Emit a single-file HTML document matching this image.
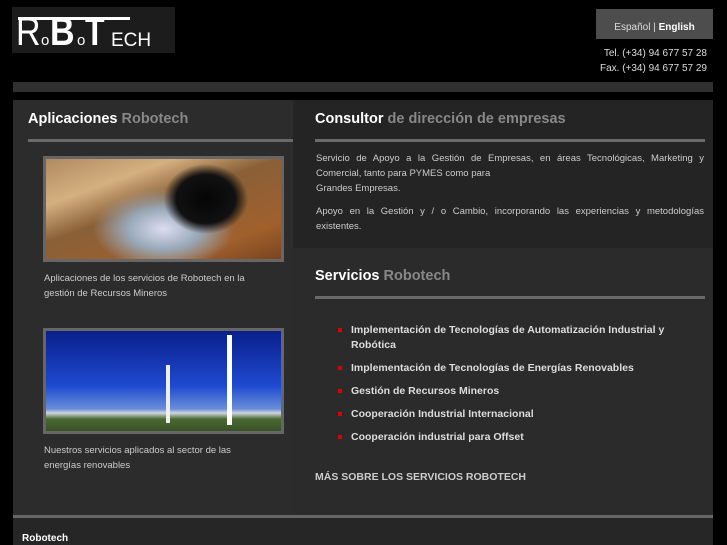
<!DOCTYPE html>
<html><head><meta charset="utf-8"><style>
*{margin:0;padding:0;box-sizing:border-box}
body{width:727px;height:545px;background:#000;font-family:"Liberation Sans",sans-serif;position:relative;overflow:hidden;color:#ddd}
.a{position:absolute}
h2{font-size:14.5px;font-weight:bold;color:#fff;position:absolute}
h2 span{color:#888}
.rule{position:absolute;height:3px;background:#6a6a6a}
p{font-size:9.5px;line-height:15px;color:#ccc}
ul{list-style:none}
li{font-size:10.5px;font-weight:bold;color:#ddd;position:relative;padding-left:36px;line-height:15px;margin-bottom:8px}
li:before{content:"";position:absolute;left:23px;top:5px;width:4px;height:4px;background:#d00}
.L{position:absolute;color:#fff;font-family:"Liberation Sans",sans-serif;line-height:1}
</style></head><body>
<div class="a" style="left:12px;top:7px;width:163px;height:46px;background:#1c1c1c"></div>
<div class="L" style="left:16px;top:12px;font-size:40px;transform:scaleX(0.85);transform-origin:left">R</div>
<div class="L" style="left:41px;top:33px;font-size:15px">o</div>
<div class="L" style="left:50px;top:12px;font-size:40px;font-weight:bold;transform:scaleX(0.85);transform-origin:left">B</div>
<div class="L" style="left:77px;top:33px;font-size:15px">o</div>
<div class="L" style="left:85px;top:12px;font-size:40px;font-weight:bold;transform:scaleX(0.8);transform-origin:left">T</div>
<div class="L" style="left:111px;top:31px;font-size:19px;letter-spacing:0px">ECH</div>
<div class="a" style="left:18px;top:17px;width:112px;height:3px;background:#fff"></div>
<div class="a" style="left:596px;top:9px;width:117px;height:30px;background:#4d4d4d;font-size:10px;color:#ddd;text-align:center;line-height:37px">Español | <b style="color:#fff">English</b></div>
<div class="a" style="right:20px;top:46px;font-size:10px;color:#ddd;text-align:right;line-height:15px">Tel. (+34) 94 677 57 28<br>Fax. (+34) 94 677 57 29</div>
<div class="a" style="left:13px;top:82px;width:700px;height:10px;background:#303030"></div>
<div class="a" style="left:13px;top:100px;width:280px;height:415px;background:#2c2c2c"></div>
<div class="a" style="left:293px;top:100px;width:420px;height:148px;background:#242424"></div>
<div class="a" style="left:293px;top:248px;width:420px;height:267px;background:#2b2b2b"></div>
<h2 style="left:28px;top:111px">Aplicaciones <span>Robotech</span></h2>
<div class="rule" style="left:28px;top:139px;width:265px"></div>
<h2 style="left:315px;top:111px">Consultor <span>de dirección de empresas</span></h2>
<div class="rule" style="left:315px;top:139px;width:390px"></div>
<div class="a" style="left:43px;top:156px;width:241px;height:106px;border:3px solid #666;background:radial-gradient(ellipse 18% 35% at 68% 40%,#050505 0,#111 70%,transparent 100%),radial-gradient(ellipse 30% 40% at 50% 70%,#dde 0,#9ab 50%,transparent 100%),linear-gradient(160deg,#b08a60,#d4b080 25%,#8a6038 45%,#a0602c 80%,#7a4420)"></div>
<div class="a" style="left:44px;top:271px;width:225px"><p>Aplicaciones de los servicios de Robotech en la gestión de Recursos Mineros</p></div>
<div class="a" style="left:43px;top:328px;width:241px;height:106px;border:3px solid #666;background:linear-gradient(180deg,#0a1f8a 0,#1e4ad0 55%,#6a8ed8 78%,#cfd6e0 82%,#4a6a30 88%,#3a5028 100%)"></div>
<div class="a" style="left:166px;top:365px;width:4px;height:58px;background:#eee"></div>
<div class="a" style="left:227px;top:335px;width:5px;height:90px;background:#fff"></div>
<div class="a" style="left:44px;top:443px;width:210px"><p>Nuestros servicios aplicados al sector de las energías renovables</p></div>
<div class="a" style="left:316px;top:151px;width:388px"><p style="text-align:justify">Servicio de Apoyo a la Gestión de Empresas, en áreas Tecnológicas, Marketing y Comercial, tanto para PYMES como para<br>Grandes Empresas.</p><p style="text-align:justify;margin-top:8px">Apoyo en la Gestión y / o Cambio, incorporando las experiencias y metodologías existentes.</p></div>
<h2 style="left:315px;top:268px">Servicios <span>Robotech</span></h2>
<div class="rule" style="left:315px;top:296px;width:390px"></div>
<ul class="a" style="left:315px;top:323px;width:380px">
<li>Implementación de Tecnologías de Automatización Industrial y Robótica</li>
<li>Implementación de Tecnologías de Energías Renovables</li>
<li>Gestión de Recursos Mineros</li>
<li>Cooperación Industrial Internacional</li>
<li>Cooperación industrial para Offset</li>
</ul>
<div class="a" style="left:315px;top:471px;font-size:10.5px;font-weight:bold;color:#ccc">MÁS SOBRE LOS SERVICIOS ROBOTECH</div>
<div class="a" style="left:13px;top:515px;width:700px;height:3px;background:#666"></div>
<div class="a" style="left:13px;top:518px;width:700px;height:27px;background:#262626"></div>
<div class="a" style="left:22px;top:533px;font-size:10px;font-weight:bold;color:#fff">Robotech</div>
</body></html>
